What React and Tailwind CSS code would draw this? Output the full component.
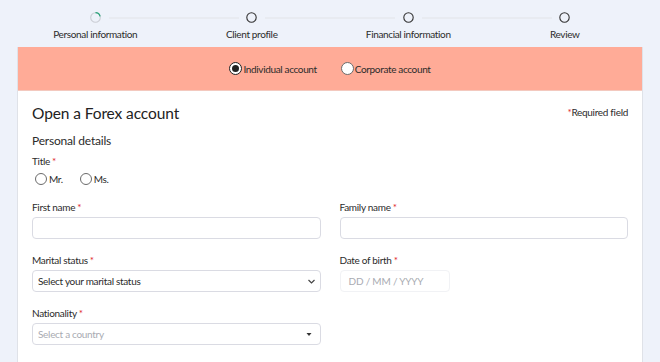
import React, { useState } from 'react';

const steps = ['Personal information', 'Client profile', 'Financial information', 'Review'];

const Req = () => <span className="text-[#e0262b] ml-[2px]">*</span>;

const Label = ({ children }) => (
  <div className="text-[10px] leading-[12px] tracking-[-0.3px] text-[#2b2b2b] mb-[4px]">
    {children}
    <Req />
  </div>
);

const Radio = ({ checked, label, onClick, big }) => (
  <label onClick={onClick} className="flex items-center cursor-pointer">
    <span
      className={`flex items-center justify-center rounded-full bg-white ${
        big ? 'w-[13px] h-[13px]' : 'w-[12px] h-[12px]'
      } ${checked ? 'border-[1.5px] border-[#222]' : 'border border-[#6b6b6b]'}`}
    >
      {checked && <span className="w-[7px] h-[7px] rounded-full bg-[#222]" />}
    </span>
    <span className={`text-[10px] leading-[12px] tracking-[-0.35px] text-[#2b2b2b] ${big ? 'ml-[1px]' : 'ml-[2px]'}`}>{label}</span>
  </label>
);

const Stepper = () => (
  <div className="mx-[17px] grid grid-cols-4 h-[47px]">
    {steps.map((s, i) => (
      <div key={s} className="flex flex-col items-center relative">
        {i > 0 && (
          <div className="absolute top-[17px] left-[-65px] w-[130px] h-[2px] bg-[#e8ebf1]" />
        )}
        <div className="mt-[12px] w-[11px] h-[11px]">
          {i === 0 ? (
            <svg width="11" height="11" viewBox="0 0 11 11">
              <circle cx="5.5" cy="5.5" r="4.8" fill="none" stroke="#cbced5" strokeWidth="1.1" />
              <path d="M5.5 0.7 A4.8 4.8 0 0 1 10.1 4.4" fill="none" stroke="#2aa37a" strokeWidth="1.3" />
            </svg>
          ) : (
            <svg width="11" height="11" viewBox="0 0 11 11">
              <circle cx="5.5" cy="5.5" r="4.7" fill="none" stroke="#333" strokeWidth="1.1" />
            </svg>
          )}
        </div>
        <div className="mt-[5px] text-[10px] leading-[12px] tracking-[-0.35px] text-[#2b2b2b]">{s}</div>
      </div>
    ))}
  </div>
);

export default function App() {
  const [account, setAccount] = useState('individual');
  const [title, setTitle] = useState('');

  return (
    <div
      className="min-h-screen bg-[#eef2fa] overflow-hidden"
      style={{ fontFamily: 'Lato, "Open Sans", sans-serif' }}
    >
      <Stepper />
      <div className="mx-[17px] bg-white border-x border-[#dfe2e8] min-h-[315px]">
        <div className="h-[44px] bg-[#ffab97] border-b border-[#f3c9bf] flex items-center justify-center gap-[24px]">
          <Radio big checked={account === 'individual'} label="Individual account" onClick={() => setAccount('individual')} />
          <Radio big checked={account === 'corporate'} label="Corporate account" onClick={() => setAccount('corporate')} />
        </div>
        <div className="px-[14px] pt-[13px] pb-[20px]">
          <div className="flex items-start justify-between">
            <h1 className="text-[15.5px] leading-[18px] tracking-[-0.1px] text-[#222]">Open a Forex account</h1>
            <div className="text-[10px] leading-[12px] tracking-[-0.3px] text-[#2b2b2b] mt-[2px]">
              <span className="text-[#e0262b]">*</span>Required field
            </div>
          </div>
          <h2 className="mt-[12px] text-[12px] leading-[14px] tracking-[-0.2px] text-[#2b2b2b]">Personal details</h2>
          <div className="mt-[7px]">
            <div className="text-[10px] leading-[12px] tracking-[-0.3px] text-[#2b2b2b]">
              Title
              <Req />
            </div>
            <div className="flex gap-[17px] pl-[3px] mt-[6px]">
              <Radio checked={title === 'mr'} label="Mr." onClick={() => setTitle('mr')} />
              <Radio checked={title === 'ms'} label="Ms." onClick={() => setTitle('ms')} />
            </div>
          </div>
          <div className="grid grid-cols-2 gap-x-[19px] mt-[16px]">
            <div>
              <Label>First name</Label>
              <input className="block w-full h-[22px] border border-[#dadbe3] rounded-[4px] outline-none" />
            </div>
            <div>
              <Label>Family name</Label>
              <input className="block w-full h-[22px] border border-[#dadbe3] rounded-[4px] outline-none" />
            </div>
            <div className="mt-[15px]">
              <Label>Marital status</Label>
              <div className="h-[22px] border border-[#dadbe3] rounded-[4px] flex items-center justify-between pl-[5px] pr-[4px]">
                <span className="text-[10px] tracking-[-0.3px] text-[#2b2b2b]">Select your marital status</span>
                <svg width="9" height="9" viewBox="0 0 9 9">
                  <path d="M1.5 3 L4.5 6 L7.5 3" fill="none" stroke="#444" strokeWidth="1.2" />
                </svg>
              </div>
            </div>
            <div className="mt-[15px]">
              <Label>Date of birth</Label>
              <div className="h-[22px] w-[110px] border border-[#f1f2f5] rounded-[4px] flex items-center px-[8px]">
                <span className="text-[10px] tracking-[-0.2px] text-[#a9abb2]">DD / MM / YYYY</span>
              </div>
            </div>
            <div className="mt-[15px]">
              <Label>Nationality</Label>
              <div className="h-[22px] border border-[#dadbe3] rounded-[4px] flex items-center justify-between pl-[5px] pr-[8px]">
                <span className="text-[10px] tracking-[-0.3px] text-[#a9abb2]">Select a country</span>
                <svg width="6" height="5" viewBox="0 0 6 5">
                  <path d="M0.5 1 L5.5 1 L3 4 Z" fill="#333" />
                </svg>
              </div>
            </div>
          </div>
        </div>
      </div>
    </div>
  );
}
